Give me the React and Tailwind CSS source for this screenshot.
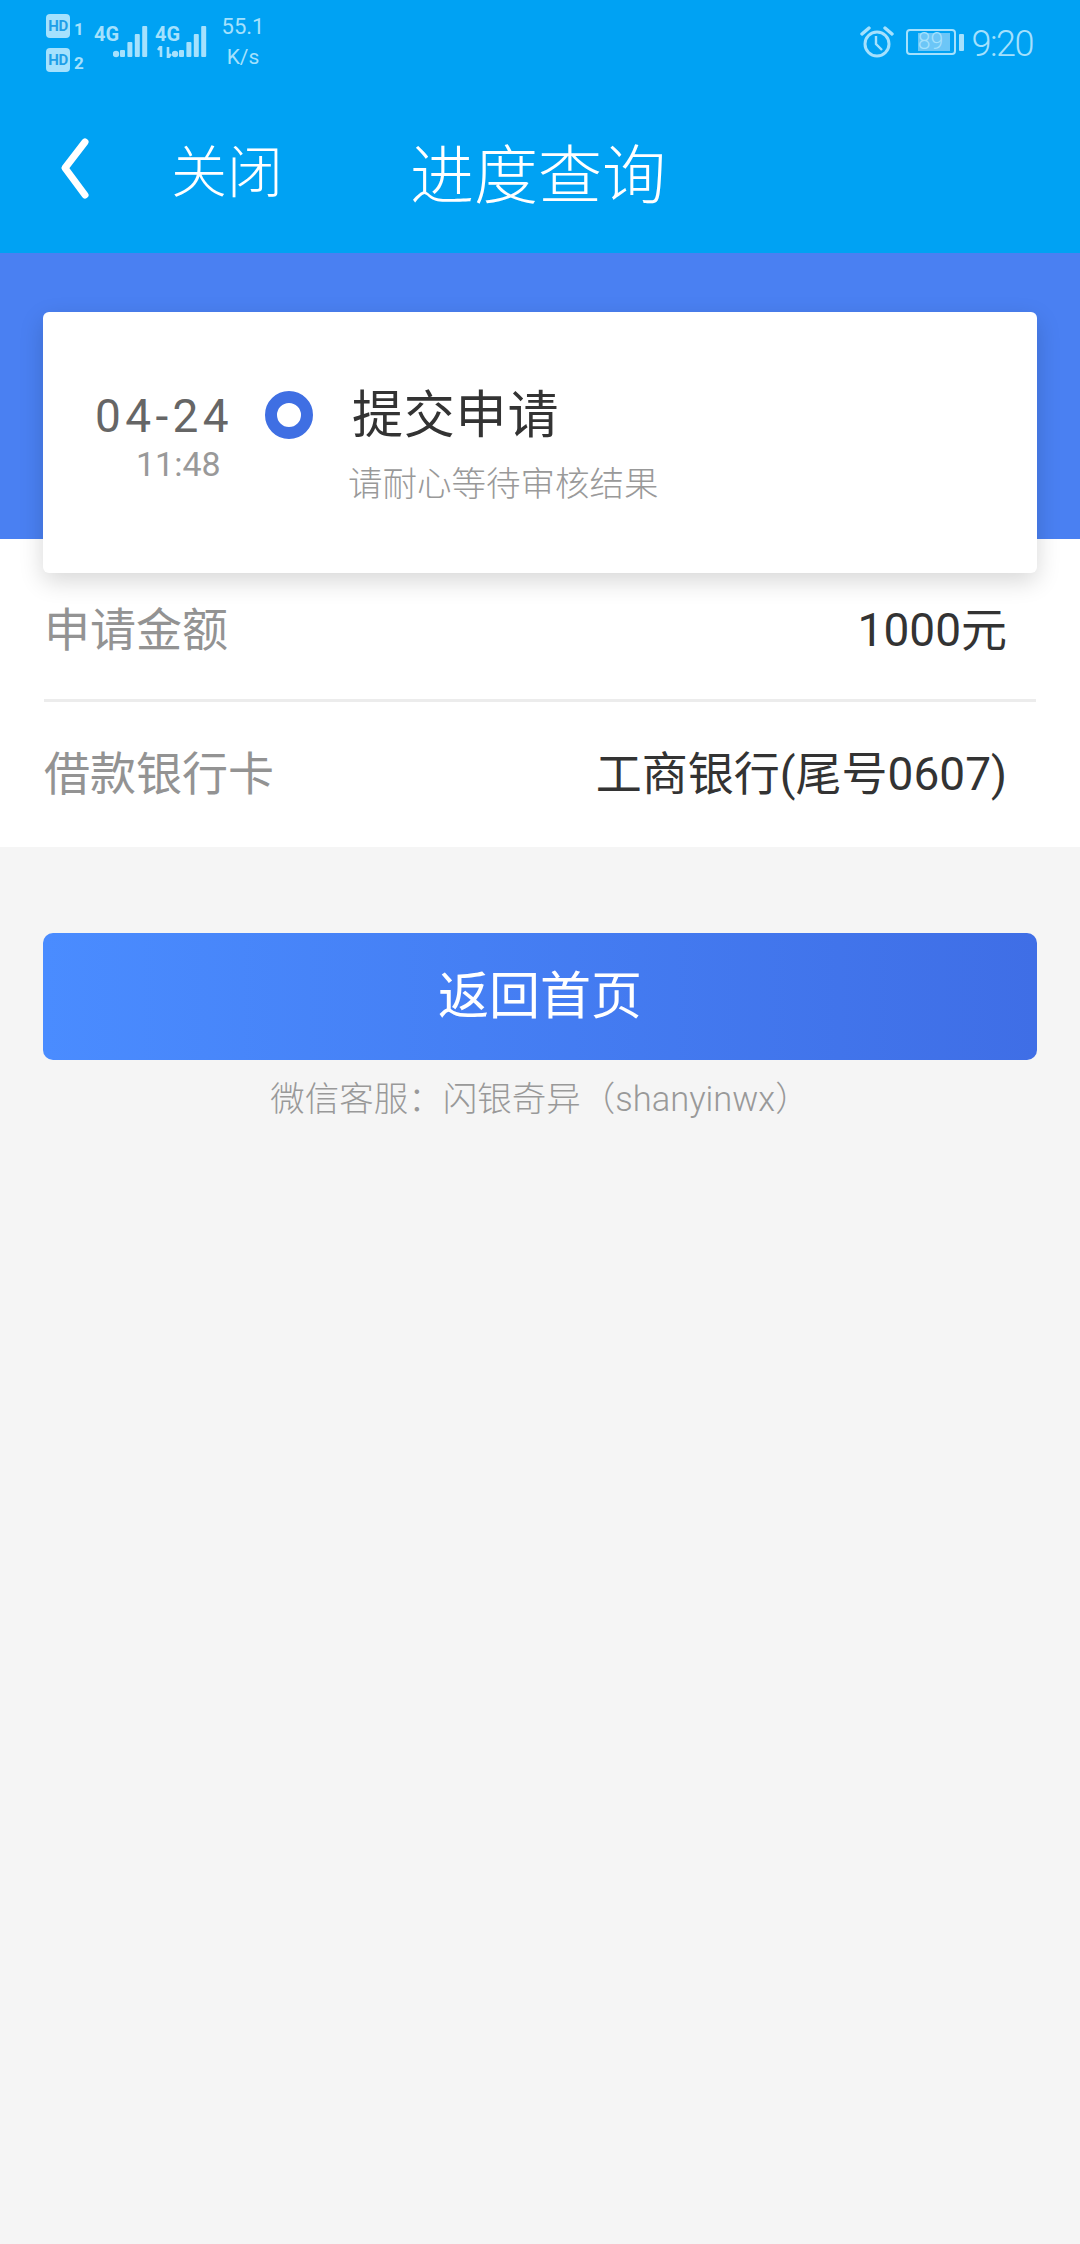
import React from "react";

const cjk = { fontFamily: 'Roboto, "Noto Sans CJK SC", sans-serif' };

function Bars({ x = 0 }) {
  const hs = [7, 15, 23, 31];
  return (
    <>
      <circle cx={x + 3} cy={28} r={3.2} fill="#a5e1fd" />
      {hs.map((h, i) => (
        <rect key={i} x={x + 7 + i * 7.4} y={31 - h} width={5} height={h} rx={1} fill="#a5e1fd" />
      ))}
    </>
  );
}

function Hd({ n }) {
  return (
    <div className="flex items-end gap-[4px]">
      <div className="w-[24px] h-[24px] rounded-[4px] bg-[#a5e1fd] text-[#1f9fe8] text-[15px] font-bold leading-[24px] text-center tracking-[-0.5px]">HD</div>
      <div className="text-[17px] font-bold leading-[17px] text-[#a5e1fd]">{n}</div>
    </div>
  );
}

function FourG() {
  return (
    <div className="absolute left-[-2px] top-[24px] text-[20px] font-bold leading-[20px] font-['Liberation_Sans_Narrow','Roboto',sans-serif]">4G</div>
  );
}

function StatusBar() {
  return (
    <div className="h-[85px] flex justify-between pl-[46px] pr-[47px] text-[#a5e1fd]" style={cjk}>
      <div className="flex items-start">
        <div className="flex flex-col gap-[10px] pt-[14px] w-[50px]">
          <Hd n="1" />
          <Hd n="2" />
        </div>
        <div className="relative w-[61px] h-[85px]">
          <FourG />
          <svg className="absolute left-[17px] top-[26px]" width="36" height="32" viewBox="0 0 36 32"><Bars /></svg>
        </div>
        <div className="relative w-[64px] h-[85px]">
          <FourG />
          <svg className="absolute left-0 top-[46px]" width="16" height="12" viewBox="0 0 16 12">
            <path d="M4 0 L4 11 M1 4 L4 0 M11 1 L11 12 M11 12 L14 8" stroke="#a5e1fd" strokeWidth="2.6" fill="none" />
          </svg>
          <svg className="absolute left-[15px] top-[26px]" width="36" height="32" viewBox="0 0 36 32"><Bars /></svg>
        </div>
        <div className="w-[44px] text-center text-[22px] leading-[31px] pt-[11px] whitespace-nowrap">
          <div>55.1</div>
          <div className="text-[21px]">K/s</div>
        </div>
      </div>
      <div className="flex items-start pt-[25px]">
        <svg width="34" height="34" viewBox="0 0 34 34" fill="none" stroke="#a5e1fd" className="mr-[12px]">
          <circle cx="17" cy="19" r="12" strokeWidth="3" />
          <path d="M16 11 L16 19 L22 25" strokeWidth="2.4" />
          <path d="M2 9 L9 3 M32 9 L25 3" strokeWidth="3.4" strokeLinecap="round" />
        </svg>
        <div className="relative w-[50px] h-[26px] mt-[4px] rounded-[4px] border-2 border-[#a5e1fd]">
          <div className="absolute left-[10px] top-[2px] bottom-[2px] w-[32px] bg-[#6cc6f7]" />
          <div className="absolute inset-0 text-center text-[23px] font-light leading-[22px]">89</div>
        </div>
        <div className="w-[5px] h-[17px] mt-[9px] ml-[3px] rounded-[1px] bg-[#a5e1fd]" />
        <div className="ml-[8px] text-[36px] font-light leading-[38px] tracking-[-1.5px]">9:20</div>
      </div>
    </div>
  );
}

function NavBar() {
  return (
    <div className="h-[168px] flex items-start text-white font-light" style={{ fontFamily: '"Noto Sans CJK SC", sans-serif' }}>
      <svg width="30" height="64" viewBox="0 0 30 64" className="ml-[60px] mt-[52px]" fill="none" stroke="#fff" strokeWidth="7" strokeLinecap="round" strokeLinejoin="round">
        <path d="M25 5 L5 31 L25 58" />
      </svg>
      <div className="ml-[81px] mt-[50px] text-[56px] leading-[66px] whitespace-nowrap">关闭</div>
      <div className="ml-[127px] mt-[48px] text-[64px] leading-[74px] whitespace-nowrap">进度查询</div>
    </div>
  );
}

function Card() {
  return (
    <div className="relative z-10 h-[261px] bg-white rounded-[6px] shadow-[0_8px_24px_rgba(0,0,0,0.16)] flex items-start" style={cjk}>
      <div className="w-[222px] pl-[52px] pt-[81px]">
        <div className="text-[46px] leading-[46px] font-normal tracking-[4.4px] text-[#666] whitespace-nowrap">04-24</div>
        <div className="mt-[8px] ml-[41px] text-[34px] leading-[34px] font-normal text-[#999]">11:48</div>
      </div>
      <div className="mt-[79px] w-[48px] h-[48px] rounded-full border-[12px] border-[#3f6fe3] bg-white" />
      <div className="pl-[35px] pt-[72px]">
        <div className="ml-[4px] text-[51px] leading-[64px] text-[#333] whitespace-nowrap" style={{ letterSpacing: "0.8px" }}>提交申请</div>
        <div className="mt-[12px] text-[34.5px] leading-[48px] font-light text-[#999] whitespace-nowrap">请耐心等待审核结果</div>
      </div>
    </div>
  );
}

function Row({ label, value, className }) {
  return (
    <div className={`flex justify-between items-center pr-[29px] text-[46px] leading-[60px] ${className}`}>
      <span className="text-[#939393] whitespace-nowrap">{label}</span>
      <span className="text-[#333] whitespace-nowrap">{value}</span>
    </div>
  );
}

export default function App() {
  return (
    <div className="min-h-[2244px] bg-[#f5f5f5] flex flex-col" style={cjk}>
      <div className="bg-[#00a2f3]">
        <StatusBar />
        <NavBar />
      </div>
      <div className="h-[286px] bg-[#4a80f2] pt-[59px] px-[43px]">
        <Card />
      </div>
      <div className="h-[308px] bg-white px-[44px]">
        <Row label="申请金额" value="1000元" className="h-[163px] pt-[62px] pb-[41px] border-b-[3px] border-[#ececec]" />
        <Row label="借款银行卡" value="工商银行(尾号0607)" className="pt-[42px]" />
      </div>
      <div className="px-[43px] pt-[86px]">
        <div className="h-[127px] rounded-[10px] bg-linear-to-r from-[#4a8cff] to-[#3f6ee6] flex items-center justify-center text-white text-[51px] leading-[60px]">
          返回首页
        </div>
        <div className="mt-[15px] text-center text-[34.5px] leading-[48px] font-light text-[#999] whitespace-nowrap">微信客服：闪银奇异（shanyinwx）</div>
      </div>
    </div>
  );
}
